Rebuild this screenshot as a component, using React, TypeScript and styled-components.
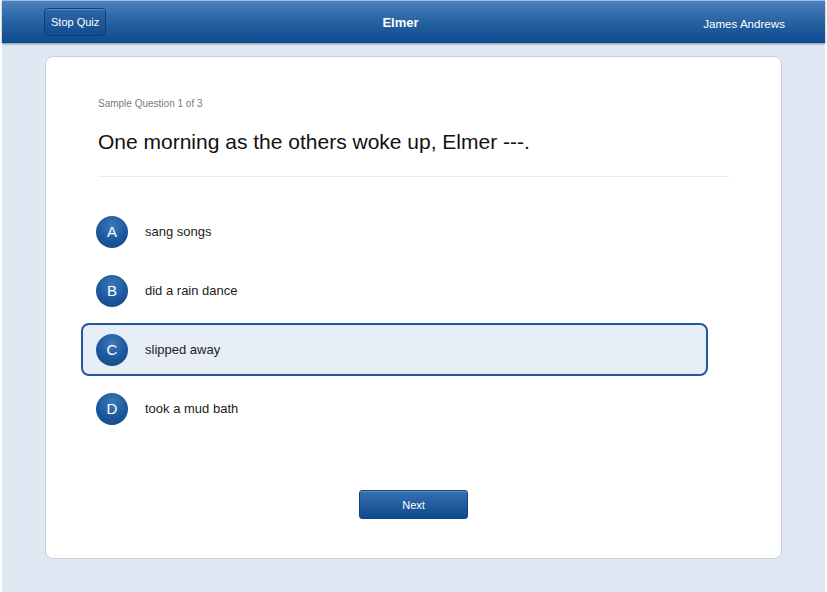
import React from "react"
import styled, { createGlobalStyle } from "styled-components"

const GlobalStyle = createGlobalStyle`
  html, body {
    margin: 0;
    padding: 0;
    background: #ffffff;
    font-family: "Liberation Sans", Arial, sans-serif;
  }
`

const options = [
  { letter: "A", text: "sang songs" },
  { letter: "B", text: "did a rain dance" },
  { letter: "C", text: "slipped away" },
  { letter: "D", text: "took a mud bath" },
]

const App: React.FC = () => {
  const selected = "C"

  return (
    <Root>
      <GlobalStyle />
      <Header>
        <HeaderButton>Stop Quiz</HeaderButton>
        <HeaderTitle>Elmer</HeaderTitle>
        <UserName>James Andrews</UserName>
      </Header>
      <Body>
        <Card>
          <Progress>Sample Question 1 of 3</Progress>
          <Question>One morning as the others woke up, Elmer ---.</Question>
          <Divider />
          <OptionList>
            {options.map(o => (
              <Option key={o.letter} selected={o.letter === selected}>
                <Letter>{o.letter}</Letter>
                <OptionText>{o.text}</OptionText>
              </Option>
            ))}
          </OptionList>
          <Footer>
            <NextButton>Next</NextButton>
          </Footer>
        </Card>
      </Body>
    </Root>
  )
}

export default App

const Root = styled.div`
  margin: 0 2px;
  display: flex;
  flex-direction: column;
  height: 592px;
  background: #e0e9f3;
`
const Header = styled.div`
  height: 42px;
  display: grid;
  grid-template-columns: 1fr auto 1fr;
  align-items: center;
  padding: 0 40px 0 42px;
  background: linear-gradient(#4a83bd 0%, #2a64a3 45%, #0c4a8f 100%);
  border-top: 1px solid #9dbcdc;
  box-shadow: 0 1px 2px rgba(40, 60, 90, 0.55);
  position: relative;
  z-index: 1;
`
const HeaderButton = styled.button`
  justify-self: start;
  height: 28px;
  padding: 0 6px;
  border-radius: 4px;
  border: 1px solid #0e3f78;
  background: linear-gradient(#2d67a7, #104c8e);
  box-shadow: inset 0 1px 0 rgba(255, 255, 255, 0.25);
  color: #ffffff;
  font-family: "Liberation Sans", Arial, sans-serif;
  font-size: 11px;
  cursor: pointer;
`
const HeaderTitle = styled.div`
  color: #ffffff;
  font-weight: bold;
  font-size: 13px;
  margin-right: 28px;
`
const UserName = styled.div`
  justify-self: end;
  margin-top: 3px;
  color: #ffffff;
  font-size: 11.6px;
`
const Body = styled.div`
  flex: 1;
  padding: 13px 43px 0;
`
const Card = styled.div`
  display: flex;
  flex-direction: column;
  height: 503px;
  box-sizing: border-box;
  padding: 40px 52px 0 52px;
  background: #ffffff;
  border: 1px solid #c5d0dc;
  border-radius: 8px;
`
const Progress = styled.div`
  font-size: 10px;
  line-height: 14px;
  color: #7a7a7a;
`
const Question = styled.h1`
  margin: 17px 0 0;
  font-size: 21px;
  line-height: 27px;
  font-weight: normal;
  color: #111111;
`
const Divider = styled.div`
  height: 1px;
  margin-top: 21px;
  background: #ebebeb;
`
const OptionList = styled.div`
  display: flex;
  flex-direction: column;
  gap: 6px;
  margin: 28px 21px 0 -17px;
`
const Option = styled.div<{ selected?: boolean }>`
  display: flex;
  align-items: center;
  height: 53px;
  box-sizing: border-box;
  padding-left: 13px;
  border-radius: 8px;
  border: 2px solid ${p => (p.selected ? "#24589a" : "transparent")};
  background: ${p => (p.selected ? "#e7eef7" : "transparent")};
`
const Letter = styled.div`
  width: 32px;
  height: 32px;
  border-radius: 50%;
  display: flex;
  align-items: center;
  justify-content: center;
  background: radial-gradient(circle at 50% 30%, #3d78b8 0%, #1b589c 55%, #0e4587 100%);
  color: #ffffff;
  font-size: 15px;
`
const OptionText = styled.div`
  margin-left: 17px;
  font-size: 13px;
  color: #222222;
`
const Footer = styled.div`
  display: flex;
  justify-content: center;
  margin-top: 55px;
`
const NextButton = styled.button`
  width: 109px;
  height: 29px;
  border-radius: 3px;
  border: 1px solid #0e4382;
  background: linear-gradient(#3670b0, #0f4a8e);
  box-shadow: inset 0 1px 0 rgba(255, 255, 255, 0.2);
  color: #ffffff;
  font-family: "Liberation Sans", Arial, sans-serif;
  font-size: 11px;
  cursor: pointer;
`
